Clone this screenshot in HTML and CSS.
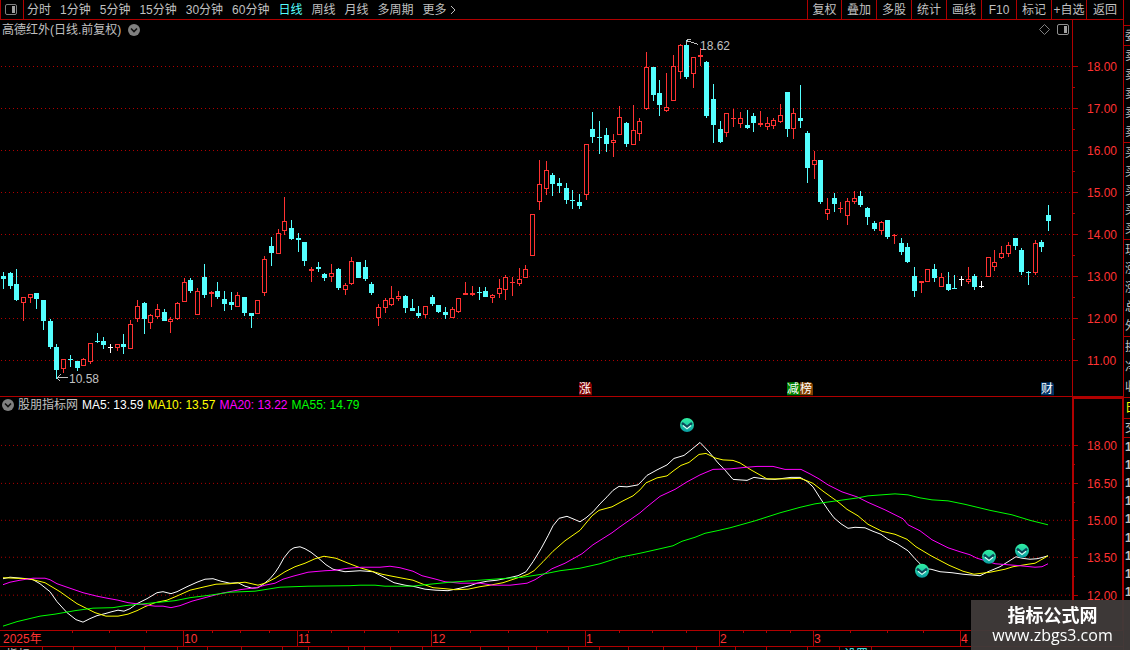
FILE: index.html
```html
<!DOCTYPE html>
<html lang="zh-CN">
<head>
<meta charset="utf-8">
<title>高德红外 日线</title>
<link rel="stylesheet" href="styles.css">
</head>
<body>
<div class="app">
  <main class="main">
    <header class="toolbar">
      <button class="panel-toggle" aria-label="侧栏">
        <svg class="panel-icon" viewBox="0 0 12 11"><rect x=".5" y=".5" width="11" height="10" rx="1.5" fill="none" stroke="#808080"/><rect x="7" y="2" width="3" height="7" fill="#a0a0a0"/></svg>
      </button>
      <nav class="periods">
        <button class="item">分时</button>
        <button class="item">1分钟</button>
        <button class="item">5分钟</button>
        <button class="item">15分钟</button>
        <button class="item">30分钟</button>
        <button class="item">60分钟</button>
        <button class="item active">日线</button>
        <button class="item">周线</button>
        <button class="item">月线</button>
        <button class="item">多周期</button>
        <button class="item more">更多<svg class="more-icon" viewBox="0 0 7 10"><path d="M1 1L5 5L1 9" fill="none" stroke="#c0c0c0"/></svg></button>
      </nav>
      <nav class="tools">
        <button class="tool first">复权</button>
        <button class="tool">叠加</button>
        <button class="tool">多股</button>
        <button class="tool">统计</button>
        <button class="tool">画线</button>
        <button class="tool">F10</button>
        <button class="tool">标记</button>
        <button class="tool">+自选</button>
        <button class="tool last">返回</button>
      </nav>
    </header>

    <section class="pane price">
      <div class="plot">
        <div class="plot-head">
          <span>高德红外(日线.前复权)</span>
          <button class="round" aria-label="展开"><svg class="round-icon" viewBox="0 0 12 12"><circle cx="6" cy="6" r="6" fill="#808080"/><path d="M3 4.5L6 7.5L9 4.5" fill="none" stroke="#101010" stroke-width="1.6"/></svg></button>
          <span class="head-icons">
            <svg class="diamond-icon" viewBox="0 0 11 11"><path d="M5.5 .5L10.5 5.5L5.5 10.5L.5 5.5Z" fill="none" stroke="#808080"/></svg>
            <svg class="panel-icon" viewBox="0 0 12 11"><rect x=".5" y=".5" width="11" height="10" rx="1.5" fill="none" stroke="#909090"/><rect x="7" y="2" width="3" height="7" fill="#a0a0a0"/></svg>
          </span>
        </div>
        <svg class="chart" id="candles" viewBox="0 39 1072 357" preserveAspectRatio="none"></svg>
      </div>
      <svg class="axis" id="price-axis" viewBox="1073 20 50 376" preserveAspectRatio="none"></svg>
    </section>

    <section class="pane indicator">
      <div class="plot">
        <div class="plot-head">
          <button class="round" aria-label="展开指标"><svg class="round-icon" viewBox="0 0 12 12"><circle cx="6" cy="6" r="6" fill="#808080"/><path d="M3 4.5L6 7.5L9 4.5" fill="none" stroke="#101010" stroke-width="1.6"/></svg></button>
          <span>股朋指标网</span>
          <span class="ma5">MA5: 13.59</span>
          <span class="ma10">MA10: 13.57</span>
          <span class="ma20">MA20: 13.22</span>
          <span class="ma55">MA55: 14.79</span>
        </div>
        <svg class="chart" id="averages" viewBox="0 413 1072 217" preserveAspectRatio="none"></svg>
      </div>
      <svg class="axis" id="ma-axis" viewBox="1074 399 48 231" preserveAspectRatio="none"></svg>
    </section>

    <svg class="timeline" id="timeline" viewBox="0 630 1123 20" preserveAspectRatio="none"></svg>
  </main>

  <aside class="side">
    <div class="group g-top"></div>
    <div class="group g-row"><span>委</span></div>
    <div class="group g-five"><span>卖</span><span>卖</span><span>卖</span><span>卖</span><span>卖</span></div>
    <div class="group g-five"><span>买</span><span>买</span><span>买</span><span>买</span><span>买</span></div>
    <div class="group g-five"><span>现</span><span>涨</span><span>涨</span><span>总</span><span>外</span></div>
    <div class="group g-three"><span>换</span><span>净</span><span>收</span></div>
    <div class="group g-tab"><span>日</span></div>
    <div class="group g-head"><span>交</span></div>
    <div class="group g-ticks"><span>1</span><span>1</span><span>1</span><span>1</span><span>1</span><span>1</span><span>1</span><span>1</span><span>1</span></div>
  </aside>
</div>
<div class="brand">
  <strong class="brand-name">指标公式网</strong>
  <a class="brand-link" href="#">www.zbgs3.com</a>
</div>
<script src="chart.js"></script>
</body>
</html>
```

FILE: styles.css
```css
* { box-sizing: border-box; }

body {
  margin: 0;
  background: #000;
  color: #c0c0c0;
  font: 12px/14px "Liberation Sans", "Noto Sans CJK SC", sans-serif;
}

button {
  margin: 0;
  padding: 0;
  border: 0;
  background: none;
  color: inherit;
  font: inherit;
  white-space: nowrap;
}

svg { display: block; }

.app {
  display: flex;
  height: 100vh;
  overflow: hidden;
}

.main {
  flex: 1;
  min-width: 0;
  display: flex;
  flex-direction: column;
}

.toolbar {
  display: flex;
  height: 20px;
  flex: none;
  border-bottom: 1px solid #b00000;
}

.panel-toggle {
  width: 24px;
  padding-left: 4px;
  border-left: 1px solid #b00000;
  border-right: 1px solid #b00000;
}

.panel-icon { width: 12px; height: 11px; }

.periods {
  display: flex;
  gap: 9px;
  padding-left: 3px;
}

.active { color: #54ffff; }

.more {
  display: flex;
  align-items: center;
  gap: 3px;
}

.more-icon { width: 7px; height: 10px; }

.tools { display: flex; margin-left: auto; }

.tool {
  width: 35px;
  border-left: 1px solid #b00000;
}

.first { width: 34px; }
.last { width: 37px; }

.pane { display: flex; min-height: 0; }

.price {
  flex: 377 1 0;
  border-bottom: 1px solid #b00000;
}

.indicator { flex: 233 1 0; }

.plot {
  flex: 1;
  min-width: 0;
  display: flex;
  flex-direction: column;
}

.plot-head {
  display: flex;
  align-items: center;
  flex: none;
  padding: 0 3px 0 2px;
  white-space: nowrap;
}

.price .plot-head { height: 19px; gap: 7px; }
.indicator .plot-head { height: 16px; gap: 4px; }

.round-icon { width: 12px; height: 12px; }

.head-icons {
  display: flex;
  align-items: center;
  gap: 7px;
  margin-left: auto;
}

.diamond-icon { width: 11px; height: 11px; }

.ma5 { color: #fff; }
.ma10 { color: #ffff00; }
.ma20 { color: #ff00ff; }
.ma55 { color: #00ff00; }

.chart {
  width: 100%;
  flex: 1;
  min-height: 0;
}

.axis {
  width: 51px;
  height: 100%;
  flex: none;
  border-left: 1px solid #b00000;
}

.indicator .axis {
  border: 2px solid #b00000;
  border-bottom: 0;
  border-right-width: 1px;
}

.timeline {
  width: 100%;
  height: 20px;
  flex: none;
}

.shape { shape-rendering: crispEdges; }

.side {
  width: 7px;
  flex: none;
  display: flex;
  flex-direction: column;
  overflow: hidden;
  border-left: 1px solid #b00000;
}

.group {
  display: flex;
  flex-direction: column;
  justify-content: space-around;
  flex: none;
  padding-left: 1px;
  border-bottom: 1px solid #b00000;
}

.g-top { height: 26px; }
.g-row { height: 20px; }
.g-five { height: 97px; }
.g-three { height: 61px; }
.g-tab { height: 21px; color: #ffff00; }
.g-head { height: 19px; }
.g-ticks { height: 163px; border: 0; font-weight: bold; }

.brand {
  position: fixed;
  right: 0;
  bottom: 0;
  width: 159px;
  height: 50px;
  padding: 3px 0 0 4px;
  background: rgba(64, 58, 57, 0.96);
  text-align: center;
}

.brand-name {
  display: block;
  color: #fff;
  font: bold 18px/22px "Noto Sans CJK SC", sans-serif;
}

.brand-link {
  display: block;
  color: #fff;
  font: 16px/20px "Open Sans", sans-serif;
  text-decoration: none;
}
```

FILE: chart.js
```javascript
const RED = '#ff3232';
const CYAN = '#54ffff';
const LINE = '#b00000';
const FONT = '"Liberation Sans", "Noto Sans CJK SC", sans-serif';

function add(parent, tag, attrs, text) {
  const node = document.createElementNS('http://www.w3.org/2000/svg', tag);
  for (const key in attrs) node.setAttribute(key, attrs[key]);
  if (text) node.textContent = text;
  parent.appendChild(node);
  return node;
}

const box = (p, x, y, w, h, fill) =>
  add(p, 'rect', { x, y, width: w, height: h, fill, class: 'shape' });

const label = (p, x, y, fill, text) =>
  add(p, 'text', { x, y, fill, 'font-size': 12, 'font-family': FONT }, text);

const gridLine = (p, y) =>
  add(p, 'path', { d: `M1 ${y + 0.5}H1072`, stroke: LINE, 'stroke-dasharray': '1 3', class: 'shape' });

// x, kind (u = up, d = down, w = flat), high, body top, body bottom, low
const candles = `
3 d 272 276 279 289|10 d 272 273 286 289|16 d 269 284 300 301|23 u 297 297 303 321|30 u 294 294 298 303
36 d 293 293 299 309|43 d 300 300 321 330|50 d 319 321 347 349|56 d 344 347 370 379|63 u 359 359 369 373
70 d 355 359 360 367|77 d 361 361 368 371|83 u 358 359 366 366|90 u 343 343 362 364|97 d 333 341 342 343
103 d 337 341 345 349|110 w 344 347 348 353|117 u 344 344 348 351|123 d 334 344 347 354|130 u 320 324 349 349
137 u 300 306 319 322|144 d 302 303 319 334|150 u 314 315 323 329|157 u 304 309 317 319|164 d 309 312 321 321
170 u 317 319 322 333|177 u 302 303 319 320|184 u 278 282 302 302|190 d 278 280 291 293|197 u 288 291 315 315
204 d 264 277 295 298|211 u 291 292 294 307|217 d 282 291 297 299|224 d 291 299 304 311|231 d 292 302 305 310
237 u 292 295 307 307|244 d 297 297 313 316|251 d 313 313 316 328|257 u 300 300 314 314|264 u 256 259 293 296
271 d 237 246 253 266|278 u 229 233 254 254|284 u 197 221 231 235|291 d 220 228 239 240|298 d 233 238 240 252
304 d 242 242 261 266|311 u 267 269 271 282|318 d 262 267 269 272|324 d 273 274 278 281|331 u 264 273 277 282
338 d 268 269 288 290|345 u 283 285 290 295|351 u 257 261 284 285|358 d 262 262 278 278|365 d 260 267 279 281
371 d 282 284 293 295|378 u 304 307 318 326|385 u 298 300 308 313|391 u 286 298 305 306|398 u 291 296 299 301
405 d 295 296 308 313|412 d 299 308 311 311|418 d 306 313 316 318|425 u 306 306 315 318|432 d 295 297 304 306
438 d 305 305 312 313|445 d 307 312 315 319|452 u 307 309 318 318|458 u 298 298 312 313|465 u 282 293 295 295
472 u 286 293 295 296|479 d 287 292 293 300|485 d 287 291 297 297|492 u 294 295 298 303|499 u 279 288 294 298
505 u 275 277 290 300|512 u 277 282 283 296|519 u 268 279 284 286|525 u 265 269 278 278|532 u 214 214 256 256
539 u 160 184 202 210|546 u 161 170 189 195|552 d 173 175 184 196|559 d 178 183 186 193|566 d 183 188 200 204
572 d 190 200 201 209|579 d 194 202 206 209|586 u 144 144 195 200|592 d 112 129 137 143|599 d 121 137 138 154
606 d 128 135 144 152|613 u 134 140 143 157|619 u 106 117 135 135|626 d 122 123 144 147|633 u 105 130 145 145
639 u 118 121 134 141|646 u 52 67 109 110|653 d 67 67 95 101|659 d 80 93 105 116|666 u 73 107 111 112
673 u 55 66 101 101|680 u 44 45 72 79|686 d 40 45 77 79|693 u 57 57 74 88|700 u 48 55 57 66
706 d 61 62 116 118|713 d 84 99 125 143|720 d 121 129 142 143|726 u 113 113 133 137|733 u 109 118 119 127
740 u 112 118 124 128|747 d 110 125 128 129|753 d 113 116 123 132|760 u 111 123 125 127|767 u 117 123 127 130
773 u 118 120 126 129|780 u 104 115 122 123|787 d 92 92 129 137|793 u 108 113 129 139|800 d 85 118 121 128
807 d 131 133 168 183|814 u 151 160 165 179|820 d 160 160 202 204|827 u 198 209 214 220|834 d 193 198 204 212
840 u 202 208 209 213|847 u 198 201 216 225|854 u 191 198 202 204|860 d 191 196 205 207|867 d 207 208 217 225
874 d 221 223 229 231|881 u 221 222 231 235|887 d 220 220 237 239|894 u 234 235 236 244|901 d 238 243 252 255
907 d 243 247 262 263|914 d 267 276 291 297|921 u 281 281 283 293|927 u 269 269 282 282|934 d 264 269 278 282
941 u 273 277 287 287|948 d 272 284 290 291|954 d 275 288 289 289|961 w 276 279 280 286|968 u 267 279 282 284
974 d 274 276 287 290|981 w 281 286 287 288|988 u 257 257 277 277|994 u 250 262 267 271|1001 u 246 253 258 259
1008 u 242 245 254 257|1015 d 238 238 246 250|1021 d 248 250 272 275|1028 d 271 272 273 285|1035 u 240 243 273 275
1041 d 240 242 247 252|1048 d 205 215 221 231`.trim().split(/[|\n]/).map(r => r.split(' '));

const price = document.getElementById('candles');
for (let y = 66; y <= 360; y += 42) gridLine(price, y);

for (const [xs, kind, ...levels] of candles) {
  const x = +xs;
  const [high, top, bottom, low] = levels.map(Number);
  const color = { u: RED, d: CYAN, w: '#ffffff' }[kind];
  if (high < top) box(price, x, high, 1, top - high, color);
  if (low > bottom) box(price, x, bottom, 1, low - bottom, color);
  if (kind === 'u' && bottom - top > 2) {
    add(price, 'rect', { x: x - 1.5, y: top + 0.5, width: 4, height: bottom - top - 1, fill: '#000', stroke: color, class: 'shape' });
  } else {
    box(price, x - 2, top, 5, bottom - top, color);
  }
}

const arrow = d => add(price, 'path', { d, fill: 'none', stroke: '#c0c0c0', class: 'shape' });
arrow('M57 377.5H68M60.5 374L57 377.5L60.5 381');
label(price, 69, 383, '#c0c0c0', '10.58');
arrow('M687 40.5L698 44.5M690.5 39.5H687.5L686.5 43.5');
label(price, 700, 50, '#c0c0c0', '18.62');

for (const [x, fill, text] of [[579, '#800000', '涨'], [787, '#008000', '减'], [800, '#804000', '榜'], [1041, '#003366', '财']]) {
  add(price, 'path', { d: `M${x} 382h11l2 2v11h-13z`, fill });
  label(price, x, 393, '#ffffff', text);
}

const averages = document.getElementById('averages');
for (const y of [445, 483, 520, 557, 595]) gridLine(averages, y);

const series = [
  ['#ffffff', '3,579 10,577.5 27,579 33,580 40,584 50,592 57,602 67,613 76,620 83,622.5 90,619 97,616 105,614 112,612 118,610.5 124,611.5 130,609 137,604 147,599 157,593 163,592 171,594 177,592 187,587 197,582.5 205,579.5 213,579 221,581.5 230,583.5 238,583 245,586.5 252,588.5 258,588 264,584 270,579 275,573 279,567 284,558 290,550.5 294,548 300,547 305,549 311,552.5 318,558 326,565 333,569.5 345,572 360,571 373,572 383,577 394,583 405,585.5 415,587 425,589.5 436,590.5 448,591 460,588.5 470,586 477,583.5 487,581.5 497,580.5 507,578.5 518,576 526,572 533,562 541,549 548,536 553,526 559,518.5 567,516.5 573,519 580,522 586,518 593,512 600,504 607,497 613,490.5 619,486.5 627,487 638,485 642,481 647,475.5 657,470 667,465 674,458.5 684,455.5 691,450 700,442.5 709,452 718,463 724,469 730,476 733,479.5 740,480 747,480.5 754,477.5 764,479 775,479.5 791,477.5 800,477.5 807,481.5 813,487 820,498 828,510 834,518 841,524 848,528.5 855,527.5 865,528 873,531.5 881,534.5 888,539.5 897,544 908,551 915,559 925,569 931,569.5 940,572 952,573 963,574.5 980,576 988,572 1000,567 1008,562 1016,557 1022,558.5 1030,559.5 1037,559 1043,557.5 1048,556'],
  ['#ffff00', '3,578 27,579 33,580 45,583 50,586 60,592 67,597 77,604 86,608.5 95,613 106,616.5 118,616.5 128,614.5 137,611 145,607 155,603 167,600.5 173,598 180,595 190,590.5 205,587 216,584.5 230,584 245,582.5 258,585.5 265,583.5 275,578.5 285,572 295,567 305,563.5 315,559 324,556.5 336,558.5 347,563 360,568 370,571 382,574.5 392,576.5 413,580.5 423,584.5 433,588 445,589 455,590 468,589.5 480,587 490,585.5 503,583 515,579 528,574.5 534,571 543,562 553,551.5 565,541 580,530.5 592,516 599,510.5 612,507 623,501 633,496 640,490 646,483 657,478 667,476 674,470.5 681,465.5 689,462.5 699,454.5 706,453.5 715,458 723,460 733,460.5 740,463 751,470 767,479 785,479 800,478.5 806,480.5 813,483.5 824,492 838,502 847,509.5 858,516 868,524.5 882,531.5 895,534.5 907,539.5 916,547 931,556 949,565.5 963,571.5 974,574.5 990,572.5 1005,569.5 1013,567 1028,564.5 1035,563.5 1043,559 1048,556'],
  ['#ff00ff', '3,585 10,582.5 20,580.5 33,578.5 45,578.5 50,580 57,584 67,587.5 83,593 97,596.5 107,598.5 118,600.5 128,603 140,604.5 155,606.5 163,606.5 171,608 180,606 192,601.5 205,598 222,593.5 240,590 256,588 265,585.5 275,583.5 283,579.5 293,576.5 308,572.5 325,571 335,570.5 348,568.5 362,567.5 380,567.5 390,566.5 400,568 413,571.5 422,576 434,579 445,582 460,583.5 480,583.5 493,585.5 510,585.5 527,583.5 535,580 543,575 552,569 565,563.5 582,554 593,545 612,533 620,527 640,513 647,507 660,496.5 675,489.5 687,482 700,475 713,469.5 730,469 745,467.5 757,466.5 773,466.5 785,469.5 801,469.5 810,474 819,479 828,485 842,492 857,497 868,502.5 885,510 903,519 908,525 920,531 932,540 948,548 960,552 970,555 977,558.5 989,562 995,564 1020,566 1035,567.5 1042,567 1048,564'],
  ['#00ff00', '3,626.5 17,622 40,616.5 55,614.5 75,611 93,608.5 113,608 125,606 150,603.5 175,601 190,598 210,595.5 230,592.5 255,591.5 280,587.5 308,586.5 350,586 360,585.5 375,585.5 385,586.5 412,586.5 430,584.5 450,582.5 480,580.5 500,579 523,577.5 545,574 560,571 580,568.5 600,564 620,557.5 640,553.5 660,549 673,546 682,541.5 695,537.5 705,533.5 717,531 730,528 755,521 780,513 800,507.5 815,504 840,500.5 858,498 868,496 895,494 908,495 920,498 932,500 948,501 965,504.5 990,510.5 1012,515 1030,520.5 1048,525']
];
for (const [stroke, points] of series) {
  add(averages, 'polyline', { points, fill: 'none', stroke, class: 'shape' });
}

const defs = add(averages, 'defs', {});
const gradient = add(defs, 'linearGradient', { id: 'ball', x1: 0, y1: 0, x2: 0, y2: 1 });
add(gradient, 'stop', { offset: 0, 'stop-color': '#30f0a0' });
add(gradient, 'stop', { offset: 0.45, 'stop-color': '#22d0a8' });
add(gradient, 'stop', { offset: 1, 'stop-color': '#089aa0' });
for (const [x, y] of [[687, 425], [922, 571], [989, 557], [1022, 551]]) {
  add(averages, 'circle', { cx: x, cy: y, r: 7, fill: 'url(#ball)' });
  add(averages, 'path', { d: `M${x - 5} ${y - 2}L${x} ${y + 2}L${x + 5} ${y - 2}`, fill: 'none', stroke: '#0c4658', 'stroke-width': 2.4 });
  add(averages, 'path', { d: `M${x - 4} ${y + 0.5}L${x} ${y + 3.7}L${x + 4} ${y + 0.5}`, fill: 'none', stroke: '#d8fff8', 'stroke-width': 1.1 });
}

const priceAxis = document.getElementById('price-axis');
for (let i = 0; i < 8; i++) {
  const y = 66 + 42 * i;
  box(priceAxis, 1073, y, 5, 1, LINE);
  if (i < 7) box(priceAxis, 1073, y + 21, 2, 1, LINE);
  label(priceAxis, 1087, y + 5, RED, (18 - i).toFixed(2));
}

const maAxis = document.getElementById('ma-axis');
[445, 483, 520, 557, 595].forEach((y, i) => {
  box(maAxis, 1074, y, 4, 1, LINE);
  box(maAxis, 1074, y + 19, 1, 1, LINE);
  label(maAxis, 1087, y + 5, RED, (18 - 1.5 * i).toFixed(2));
});

const timeline = document.getElementById('timeline');
box(timeline, 0, 630, 1123, 1, LINE);
box(timeline, 0, 646, 1123, 1, LINE);
for (const x of [72, 109, 146, 212, 240, 269, 308, 331, 364, 398, 470, 508, 547, 619, 652, 686, 743, 766, 790, 850, 887, 923]) {
  box(timeline, x, 631, 1, 2, LINE);
}
for (const [x, text] of [[183, '10'], [297, '11'], [431, '12'], [585, '1'], [719, '2'], [813, '3'], [960, '4']]) {
  box(timeline, x, 631, 1, 15, LINE);
  label(timeline, x + 1, 643, RED, text);
}
label(timeline, 3, 643, RED, '2025年');
for (const x of [42, 73, 115, 144, 177, 207, 241, 282, 308, 348, 364, 390, 422, 480, 508, 536, 568, 599, 628, 663, 696, 735, 766, 807, 839, 871]) {
  box(timeline, x, 647, 1, 3, LINE);
}
label(timeline, 6, 659, '#c0c0c0', '指标');
label(timeline, 844, 659, CYAN, '设置');
```
